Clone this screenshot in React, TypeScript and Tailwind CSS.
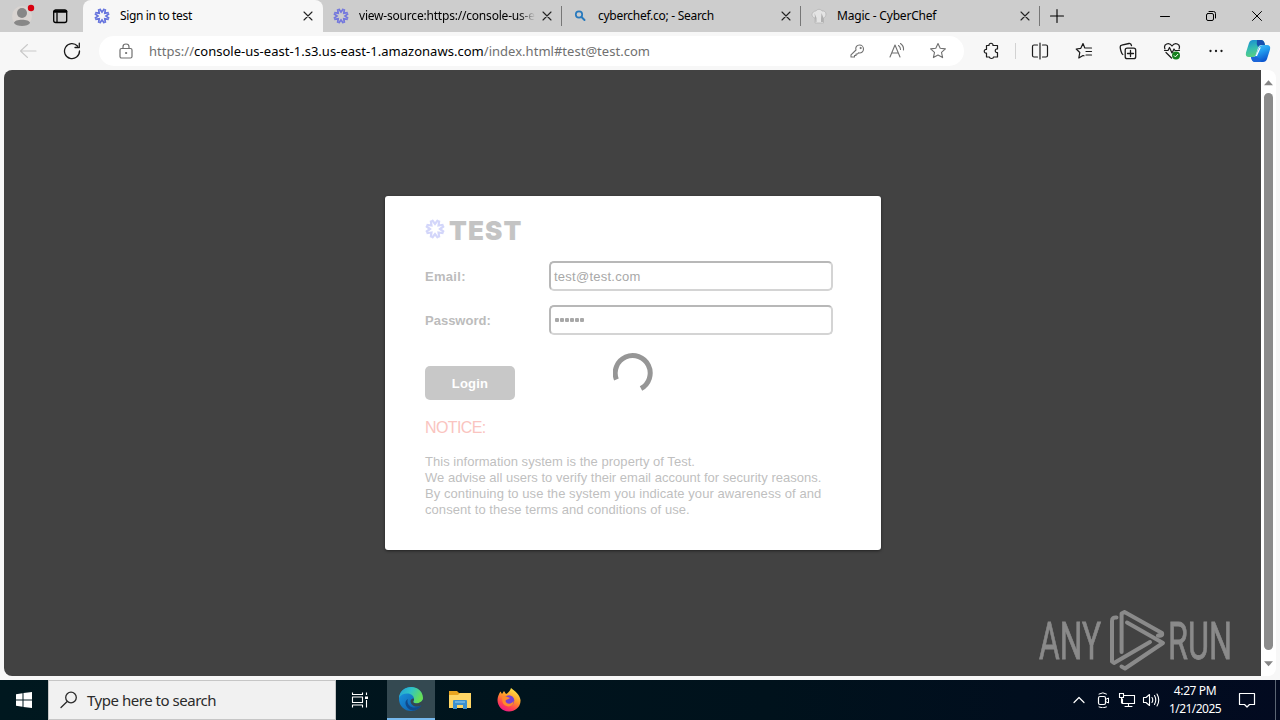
import type { ReactNode } from 'react'
import clsx from 'clsx'

type IconProps = { size?: number; className?: string; children: ReactNode }

function Icon({ size = 16, className, children }: IconProps) {
  return (
    <svg
      width={size}
      height={size}
      viewBox={`0 0 ${size} ${size}`}
      fill="none"
      stroke="currentColor"
      strokeLinecap="round"
      strokeLinejoin="round"
      className={clsx('block shrink-0', className)}
    >
      {children}
    </svg>
  )
}

function CloseIcon() {
  return (
    <Icon size={10}>
      <path d="M1 1l8 8M9 1L1 9" strokeWidth="1.1" />
    </Icon>
  )
}

// Eight chevrons around an empty centre
function SnowLogo({ size, className }: { size: number; className?: string }) {
  const arms = [0, 45, 90, 135, 180, 225, 270, 315]
  return (
    <svg
      width={size}
      height={size}
      viewBox="-10 -10 20 20"
      className={clsx('block shrink-0', className)}
      fill="none"
      stroke="currentColor"
      strokeWidth="2.2"
    >
      {arms.map((angle) => (
        <path
          key={angle}
          d="M-3 -9L0 -5L3 -9"
          transform={`rotate(${angle})`}
        />
      ))}
    </svg>
  )
}

function ChefHat() {
  return (
    <svg width="16" height="16" viewBox="0 0 16 16" className="block shrink-0">
      <path
        d="M4 15V10C1 9.500 .5 6.500 1.500 5C2.500 3.200 4 3 5 3C6 .8 10 .8 11 3C13 2.500 15 4 15 6C15 8 14 9.500 12.500 10V15Z"
        fill="#e4e4e4"
        stroke="#b4b4b4"
        strokeWidth=".8"
      />
      <path d="M3.500 5l2 5v4h-1zM10.500 5l-.5 6v3h2.500v-4z" fill="#b0b0b0" />
    </svg>
  )
}

type TabProps = {
  icon: ReactNode
  title: string
  active?: boolean
  fade?: boolean
  titleClass: string
}

function Tab({ icon, title, active, fade, titleClass }: TabProps) {
  return (
    <div
      className={clsx(
        'flex h-8 items-center',
        active
          ? 'w-60 rounded-t-lg bg-[#f7f7f7] pl-[11px]'
          : 'w-[239px] pl-[10px]',
      )}
    >
      {icon}
      <div
        className={clsx(
          'ml-[10px] w-[177px] text-xs whitespace-nowrap',
          fade && '[mask-image:linear-gradient(to_right,#000_160px,transparent_176px)]',
        )}
      >
        <span className={titleClass}>{title}</span>
      </div>
      <div className="ml-[6px] text-[#222]">
        <CloseIcon />
      </div>
      {!active && <div className="ml-auto h-5 w-px bg-[#777]" />}
    </div>
  )
}

function TabStrip() {
  return (
    <div className="flex h-8 bg-[#cdcdcd] text-black">
      <div className="flex w-[83px] items-center pl-[12px]">
        <svg width="24" height="24" viewBox="0 0 24 24" className="block">
          <circle cx="10" cy="12" r="10" fill="#d9d4d1" />
          <circle cx="10" cy="9" r="5" fill="#878787" />
          <path d="M2 19C2 14.500 18 14.500 18 19C16 23 4 23 2 19Z" fill="#878787" />
          <circle cx="19" cy="4" r="3.200" fill="#d8000f" />
        </svg>
        <Icon className="ml-[16px]">
          <rect x="1.700" y="2" width="13" height="12.500" rx="2" strokeWidth="1.300" />
          <path d="M2.500 3.500H14" strokeWidth="2.500" />
          <path d="M5 5V14" strokeWidth="1.300" />
        </Icon>
      </div>
      <Tab
        active
        icon={<SnowLogo size={16} className="text-[#6674dd]" />}
        title="Sign in to test"
        titleClass="tracking-[-0.35px]"
      />
      <Tab
        fade
        icon={<SnowLogo size={16} className="text-[#7478dd]" />}
        title="view-source:https://console-us-e"
        titleClass="tracking-[-0.2px]"
      />
      <Tab
        icon={
          <Icon className="text-[#2779bd]">
            <circle cx="7" cy="6.500" r="3.200" strokeWidth="1.700" />
            <path d="M9.500 9l3 3" strokeWidth="2" />
          </Icon>
        }
        title="cyberchef.co; - Search"
        titleClass="tracking-[-0.28px]"
      />
      <Tab icon={<ChefHat />} title="Magic - CyberChef" titleClass="tracking-[-0.2px]" />
      <div className="flex flex-1 items-center">
        <Icon className="ml-[9px]">
          <path d="M1.500 8H14.500M8 1.500V14.500" strokeWidth="1.100" />
        </Icon>
        <div className="ml-auto flex">
          <div className="flex w-[46px] justify-center">
            <Icon size={12}>
              <path d="M1.500 6.500H10.500" />
            </Icon>
          </div>
          <div className="flex w-[46px] justify-center">
            <Icon size={12}>
              <rect x="1.500" y="3.500" width="7" height="7" rx="1.500" />
              <path d="M4 1.500H8.500Q10.500 1.500 10.500 3.500V8" />
            </Icon>
          </div>
          <div className="flex w-[46px] justify-center">
            <Icon size={12}>
              <path d="M1.500 1.500l9 9M10.500 1.500l-9 9" />
            </Icon>
          </div>
        </div>
      </div>
    </div>
  )
}

const STAR =
  'M9 1.600L11.200 6.300L16.400 6.900L12.500 10.400L13.600 15.600L9 13L4.400 15.600L5.500 10.400L1.600 6.900L6.800 6.300Z'

function Copilot() {
  return (
    <svg width="26" height="24" viewBox="0 0 26 24" className="block shrink-0">
      <defs>
        <linearGradient id="copilot-left" x1="0" y1="0" x2="0.300" y2="1">
          <stop offset="0" stopColor="#1689d6" />
          <stop offset="0.550" stopColor="#35bdb0" />
          <stop offset="1" stopColor="#58cf82" />
        </linearGradient>
        <linearGradient id="copilot-right" x1="0" y1="0" x2="0.500" y2="1">
          <stop offset="0" stopColor="#52cdf8" />
          <stop offset="0.500" stopColor="#229ff0" />
          <stop offset="1" stopColor="#0b57cf" />
        </linearGradient>
      </defs>
      <path
        d="M8 1H16Q18.500 1 19.500 4L20 6H16Q14 6 13 9L10.500 16.500Q9.800 18 8 18H4Q0 18 1 13.500L4 4Q5 1 8 1Z"
        fill="url(#copilot-left)"
      />
      <path d="M12 1H16Q18.500 1 19.500 4L20 6H16Q14 6 13 8Q11 5 12 1Z" fill="#174fae" />
      <path
        d="M18 6H22Q26 6 25 10.500L22 20Q21 23 18 23H10Q7.500 23 6.500 20L6 18H8Q10 18 11 16L14 8Q15 6 18 6Z"
        fill="url(#copilot-right)"
      />
      <path d="M14.500 8.500L15.800 8.500L12 17L10.500 17Z" fill="#fff" />
      <path d="M6 18H11Q14 18 16 23H10Q7.500 23 6.500 20Z" fill="#1c65d8" />
    </svg>
  )
}

function Toolbar() {
  return (
    <div className="flex h-[38px] items-center bg-[#f7f7f7] text-[#1b1b1b]">
      <Icon size={18} className="ml-[19px] text-[#c9c9c9]">
        <path d="M17 9H1.500M8.500 2.500L1.500 9l7 6.500" strokeWidth="1.100" />
      </Icon>
      <Icon size={18} className="ml-[26px]">
        <path d="M16.500 9A7.500 7.500 0 1 1 14.500 4M16.300 1.200V5.500H12" strokeWidth="1.300" />
      </Icon>
      <div className="ml-[18px] flex h-[30px] w-[865px] items-center rounded-full bg-white text-[#707070]">
        <Icon className="ml-[19px]">
          <rect x="2" y="5.500" width="12" height="9.500" rx="1.500" strokeWidth="1.200" />
          <path d="M5 5.500V3.800Q5 1 8 1T11 3.800V5.500" strokeWidth="1.200" />
          <circle cx="8" cy="10" r=".6" fill="currentColor" />
        </Icon>
        <div className="ml-[15px] w-[505px] pt-px text-[13px] tracking-[0.025px] whitespace-nowrap">
          <span>https://</span>
          <span className="text-black">console-us-east-1.s3.us-east-1.amazonaws.com</span>
          <span>/index.html#test@test.com</span>
        </div>
        <Icon className="ml-auto">
          <path
            d="M2 14V11.800L7 7C6 4 8 2 10.500 2C13 2 14.500 4 14.500 6C14.500 9 12 10.500 9.500 9.800L8.500 11H7V12.500H5.500V14Z"
            strokeWidth="1.100"
          />
          <circle cx="11.500" cy="5" r=".6" fill="currentColor" />
        </Icon>
        <Icon size={18} className="ml-[23px]">
          <path
            d="M2 15L7 3L12 15M3.800 11H10.200M10.500 3.500Q12.500 5 12.500 7.500M12.500 1.500Q16 4 15.500 8"
            strokeWidth="1.100"
          />
        </Icon>
        <Icon size={18} className="mr-[17px] ml-[23px]">
          <path d={STAR} strokeWidth="1.100" />
        </Icon>
      </div>
      <Icon size={18} className="ml-[19px]">
        <path
          d="M3.500 3.500H6C5.500 .5 10.500 .5 10 3.500H14.500V7C11.500 6.500 11.500 11 14.500 10.500V15H10.500C10.500 17 6.500 17 6.500 15H3.500V11C.5 11.500 .5 7 3.500 7.500Z"
          strokeWidth="1.200"
        />
      </Icon>
      <div className="ml-[14px] h-4 w-px bg-[#d2d2d2]" />
      <Icon size={18} className="ml-[15px]">
        <path
          d="M6.500 3H3Q1.500 3 1.500 4.500V13.500Q1.500 15 3 15H6.500M11.500 3H15Q16.500 3 16.500 4.500V13.500Q16.500 15 15 15H11.500M9 1V17"
          strokeWidth="1.200"
        />
      </Icon>
      <Icon size={18} className="ml-[26px]">
        <path
          d="M10.500 6H9.800L8 1.600L5.800 6.300L1.200 7L4.800 10.500L3.800 16L8 13.500L9 13.800M11 6H16.500M11 9.500H16.500M11 13H16.500"
          strokeWidth="1.200"
        />
      </Icon>
      <Icon size={18} className="ml-[26px]">
        <rect x="6.200" y="6.200" width="10.500" height="10.500" rx="2" strokeWidth="1.300" />
        <path
          d="M11.500 8.500V14.500M8.500 11.500H14.500M3.800 12.500C2.500 12 1.200 7 1.200 5Q1.200 3.500 2.700 3.200L10 1.500Q12 1.200 12.500 3.500"
          strokeWidth="1.300"
        />
      </Icon>
      <Icon size={18} className="ml-[26px]">
        <path
          d="M2 7C0 2 6 -.5 9 4C12 -.5 18 2 16 7M1.500 8.500H5L6.500 5.500L9 11L11 7L12 8.500H16.500M3 10.500L8.500 16"
          strokeWidth="1.200"
        />
        <circle cx="13" cy="13.500" r="4" fill="#16801f" stroke="none" />
        <path d="M11.200 13.700l1.200 1.200 2.400-2.600" stroke="white" />
      </Icon>
      <Icon size={18} className="ml-[26px]">
        <path d="M3.500 9h.01M9 9h.01M14.500 9h.01" strokeWidth="2.300" />
      </Icon>
      <div className="ml-[20px]">
        <Copilot />
      </div>
    </div>
  )
}

function Watermark() {
  return (
    <div className="absolute right-[24px] bottom-px opacity-90">
      <svg width="198" height="66" viewBox="0 0 198 66" className="block">
        <g
          fill="#929292"
          stroke="#929292"
          strokeWidth=".8"
          fontFamily="Roboto, sans-serif"
          fontSize="52"
        >
          <text x="0" y="50" textLength="62" lengthAdjust="spacingAndGlyphs">
            ANY
          </text>
          <text x="129" y="50" textLength="64" lengthAdjust="spacingAndGlyphs">
            RUN
          </text>
        </g>
        <g
          fill="none"
          stroke="#929292"
          strokeWidth="4"
          strokeLinecap="round"
          strokeLinejoin="round"
        >
          <path d="M77.500 8.500Q73 8 73 12V52.500L75 54L111 33" />
          <path d="M82.600 43V4.500L85.500 3L123 24Q124 27.500 119 26.500" />
          <path d="M88 13.500L124 34L86 59.500L82.500 57.500" />
        </g>
      </svg>
    </div>
  )
}

function LoginCard() {
  return (
    <div className="relative h-[354px] w-[496px] rounded-[3px] bg-white px-10 pt-[22px] font-['Liberation_Sans',Arial,sans-serif] text-[13px] text-[#bcbcbc] shadow-[0_1px_3px_rgba(0,0,0,0.5)]">
      <div className="flex h-6 items-center">
        <SnowLogo size={20} className="-mt-[2px] text-[#d3d6fa]" />
        <h1 className="ml-1 pt-px font-['Inter',sans-serif] text-[26px] leading-6 font-black tracking-[1.1px] text-[#c4c4c4]">
          TEST
        </h1>
      </div>
      <div className="mt-[19px] flex h-[30px] items-center">
        <label className="w-[124px] pt-0.5 font-bold tracking-[0.3px]">Email:</label>
        <div className="flex h-[30px] w-[284px] items-center rounded-[5px] border-2 border-t-[#b8b8b8] border-r-[#d4d4d4] border-b-[#d4d4d4] border-l-[#b8b8b8] pl-[3px] text-[#a8a8a8]">
          <span className="pt-0.5 tracking-[0.25px]">test@test.com</span>
        </div>
      </div>
      <div className="mt-[14px] flex h-[30px] items-center">
        <label className="w-[124px] pt-0.5 font-bold">Password:</label>
        <div className="flex h-[30px] w-[284px] items-center gap-px rounded-[5px] border-2 border-t-[#b8b8b8] border-r-[#d4d4d4] border-b-[#d4d4d4] border-l-[#b8b8b8] pl-[4px]">
          {[0, 1, 2, 3, 4, 5].map((dot) => (
            <i key={dot} className="size-1 rounded-[1px] bg-[#a8a8a8]" />
          ))}
        </div>
      </div>
      <button className="mt-[31px] block h-[34px] w-[90px] rounded-[5px] bg-[#c8c8c8] pt-0.5 font-bold tracking-[0.2px] text-white">
        Login
      </button>
      <p className="mt-[18px] text-base leading-5 tracking-[-0.6px] text-[#fac4c0]">NOTICE:</p>
      <p className="mt-[16px] leading-4 whitespace-nowrap text-[#bfbfbf]">
        <span className="tracking-[0.03px]">
          This information system is the property of Test.
        </span>
        <br />
        <span className="tracking-[0.02px]">
          We advise all users to verify their email account for security reasons.
        </span>
        <br />
        <span className="tracking-[0.07px]">
          By continuing to use the system you indicate your awareness of and
        </span>
        <br />
        <span className="tracking-[0.07px]">
          consent to these terms and conditions of use.
        </span>
      </p>
      <svg width="40" height="40" viewBox="0 0 40 40" className="absolute top-[157px] left-[228px]">
        <path
          d="M3.400 26.500A17.500 17.500 0 1 1 28 35.500"
          fill="none"
          stroke="#969696"
          strokeWidth="5"
        />
      </svg>
    </div>
  )
}

function Page() {
  return (
    <div className="flex h-[610px] bg-[#f7f7f7] pr-1 pb-1 pl-1">
      <main className="relative flex flex-1 items-center justify-center rounded-l-lg bg-[#424242] pl-px">
        <LoginCard />
        <Watermark />
      </main>
      <div className="flex w-[15px] flex-col items-center rounded-r-lg bg-white text-[#858585]">
        <svg width="9" height="6" viewBox="0 0 10 6" className="mt-[10px] block">
          <path d="M5 0L10 5.500H0Z" fill="currentColor" />
        </svg>
        <div className="mt-[7px] h-[557px] w-[9px] rounded-full bg-[#8b8b8b]" />
        <svg width="9" height="6" viewBox="0 0 10 6" className="mt-[11px] block">
          <path d="M5 5.500L10 0H0Z" fill="currentColor" />
        </svg>
      </div>
    </div>
  )
}

function EdgeIcon() {
  return (
    <svg width="24" height="24" viewBox="0 0 24 24" className="block">
      <defs>
        <linearGradient id="edge-top" x1="0" y1="0" x2="1" y2="0.400">
          <stop offset="0" stopColor="#229bd8" />
          <stop offset="0.500" stopColor="#2fc3c7" />
          <stop offset="1" stopColor="#67df55" />
        </linearGradient>
        <linearGradient id="edge-body" x1="0" y1="0" x2="1" y2="1">
          <stop offset="0" stopColor="#1b9be5" />
          <stop offset="1" stopColor="#0c54a2" />
        </linearGradient>
      </defs>
      <circle cx="12" cy="12" r="12" fill="url(#edge-body)" />
      <path
        d="M0 11C1 -3 23 -4 24 11C24 16 18 17.500 14.500 15.500C13.500 14.800 15.500 14 15 11.500C14 5 3 5 0 11Z"
        fill="url(#edge-top)"
      />
      <path d="M9 12C7 16 11 21 16 20.500C19 20.500 21 19 22.500 18C20 23 14 25 10 22C6 19 5 14 9 12Z" fill="#114a8b" />
      <path d="M14.500 15.500C17 17.500 22 16 24 12.500L24 18L22 18.500C18 21 11.500 19 11.500 14C12 12 14 11 15 12C15 14 13.500 14.700 14.500 15.500Z" fill="#36474f" />
    </svg>
  )
}

function FolderIcon() {
  return (
    <svg width="22" height="20" viewBox="0 0 22 20" className="block">
      <path d="M0 1H8L10 3H21V17H0Z" fill="#e9a520" />
      <path d="M0 5H9L11 3H22V18H0Z" fill="#ffd665" />
      <path d="M4 19V11Q4 10 5 10H17Q18 10 18 11V19H14V15H8V19Z" fill="#3e91ce" />
      <path d="M6 12H16" stroke="#79bce7" strokeWidth="1.500" />
    </svg>
  )
}

function FirefoxIcon() {
  return (
    <svg width="24" height="24" viewBox="0 0 24 24" className="block">
      <defs>
        <linearGradient id="fox" x1="0.800" y1="0" x2="0.300" y2="1">
          <stop offset="0" stopColor="#fff04d" />
          <stop offset="0.450" stopColor="#ff9928" />
          <stop offset="0.750" stopColor="#ff4550" />
          <stop offset="1" stopColor="#ed1688" />
        </linearGradient>
      </defs>
      <path
        d="M14 0C18 3 23 7 23.500 12C24 19 18 23.500 12 23.500C5 23.500 .5 18 .5 12C.5 9 2 5.500 3.500 3.500L5 6L7 3L9 6C11 5 13 3 14 0Z"
        fill="url(#fox)"
      />
      <circle cx="12" cy="12.500" r="5.300" fill="#7541d4" />
      <path d="M5 9C8 7 11 9 13 10C11 12 9 11 8.500 13C9 16 14 17 16.500 13C17 20 7 20 5.500 14Z" fill="#ff8a2b" />
    </svg>
  )
}

function Taskbar() {
  return (
    <footer className="flex h-10 bg-[linear-gradient(to_right,#00181f,#00121c_60%,#020a20)] text-white">
      <div className="flex w-12 items-center justify-center">
        <svg width="16" height="16" viewBox="0 0 16 16" fill="white" className="block">
          <path d="M0 2.300L6.500 1.300V7.500H0ZM7.500 1.100L16 0V7.500H7.500ZM0 8.500H6.500V14.700L0 13.700ZM7.500 8.500H16V16L7.500 14.900Z" />
        </svg>
      </div>
      <div className="flex w-72 items-center border border-[#c6c6c6] bg-[#f1f1f1] pl-[11px] text-[#2b2b2b]">
        <Icon size={18}>
          <circle cx="11" cy="6.500" r="5.300" strokeWidth="1.300" />
          <path d="M7.200 10.500L1 16.500" strokeWidth="1.300" />
        </Icon>
        <span className="ml-[9px] text-[15px] tracking-[-0.47px] whitespace-nowrap">
          Type here to search
        </span>
      </div>
      <div className="flex w-[51px] items-center justify-center">
        <Icon size={18} className="-ml-1">
          <path
            d="M1.500 1.500V3.500H11.500V1.500M1.500 16.500V14H11.500V16.500M1.500 6H11.500V11.500H1.500ZM15.500 1.500V4M15.500 9V16.500"
            strokeLinecap="butt"
            strokeWidth="1.100"
          />
          <path d="M14 5.500H17V8H14Z" fill="white" stroke="none" />
        </Icon>
      </div>
      <div className="flex w-12 items-center justify-center border-b-2 border-[#76b9ed] bg-[#344951]">
        <EdgeIcon />
      </div>
      <div className="flex w-[49px] items-center justify-center">
        <FolderIcon />
      </div>
      <div className="flex w-[49px] items-center justify-center">
        <FirefoxIcon />
      </div>
      <div className="ml-auto flex items-center">
        <Icon size={12}>
          <path d="M1 8.500L6 3.500l5 5" strokeWidth="1.200" />
        </Icon>
        <Icon className="ml-[10px]">
          <rect x="3.500" y="4.500" width="7" height="8" rx="1.500" strokeWidth="1.200" />
          <path d="M10.500 7.500L13.500 6V11L10.500 9.500M4 2Q8 -.5 11.500 2M4 15Q8 17 11.500 15" />
        </Icon>
        <Icon size={18} className="ml-[7px]">
          <path
            d="M5.500 4.500H16.500V12.500H4.500V8M10.500 12.500V15.500M7 15.500H14M1.500 2.500H5.500V6.500H1.500ZM3.500 6.500V12"
            strokeLinejoin="miter"
            strokeWidth="1.100"
          />
        </Icon>
        <Icon size={18} className="ml-[6px]">
          <path
            d="M1.500 6.500H4L7.500 3.500V14.500L4 11.500H1.500ZM10 6.500Q11.500 9 10 11.500M12.500 4.500Q15 9 12.500 13.500M15 3Q18.500 9 15 15"
            strokeWidth="1.100"
          />
        </Icon>
        <div className="ml-[6px] flex w-[58px] flex-col items-center text-xs leading-[18px] whitespace-nowrap">
          <span className="tracking-[-0.4px]">4:27 PM</span>
          <span className="tracking-[-0.55px]">1/21/2025</span>
        </div>
        <Icon size={18} className="ml-[14px]">
          <path d="M1.500 2.500H16.500V13.500H11.500L9 16L6.500 13.500H1.500Z" strokeWidth="1.200" />
        </Icon>
        <div className="ml-[19px] h-10 w-px bg-[#5b6573]" />
        <div className="w-1" />
      </div>
    </footer>
  )
}

export default function App() {
  return (
    <div className="h-[720px] w-[1280px] overflow-hidden font-['Noto_Sans','Open_Sans',sans-serif]">
      <TabStrip />
      <Toolbar />
      <Page />
      <Taskbar />
    </div>
  )
}
